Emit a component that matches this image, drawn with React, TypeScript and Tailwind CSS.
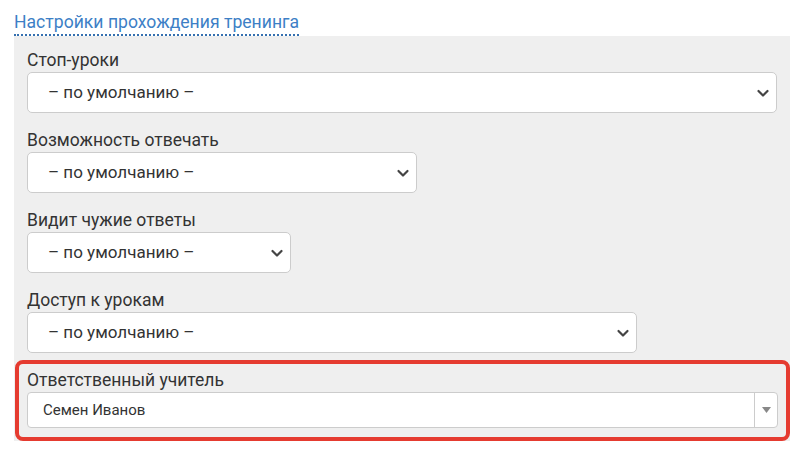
import React from "react";

const font = { fontFamily: "Roboto, 'Noto Sans', sans-serif" };

function Chevron() {
  return (
    <svg width="14" height="14" viewBox="0 0 14 14" className="shrink-0">
      <path d="M2.5 5 L7 9.5 L11.5 5" fill="none" stroke="#444" strokeWidth="2.2" strokeLinecap="round" strokeLinejoin="round" />
    </svg>
  );
}

function Select({ width }: { width: string }) {
  return (
    <div className={`${width} h-[41px] bg-white border border-[#cccccc] rounded-[5px] flex items-center justify-between pl-[20px] pr-[6px]`}>
      <span className="text-[17px] text-[#333]">– по умолчанию –</span>
      <Chevron />
    </div>
  );
}

function Field({ label, width, mb = "mb-[15px]" }: { label: string; width: string; mb?: string }) {
  return (
    <div className={mb}>
      <div className="h-[24px] leading-[24px] text-[17.5px] text-[#333]">{label}</div>
      <Select width={width} />
    </div>
  );
}

export default function App() {
  return (
    <div className="w-[806px] h-[454px] bg-white pl-[14px] pr-[16px]" style={font}>
      <div className="pt-[11px] h-[36px]">
        <span className="inline-block text-[17.6px] leading-[20px] text-[#3d7fc6] border-b-2 border-dotted border-[#3570b0] pb-[2px]">
          Настройки прохождения тренинга
        </span>
      </div>
      <div className="bg-[#efefef] h-[405px] pt-[12px] px-[13px]">
        <Field label="Стоп-уроки" width="w-full" />
        <Field label="Возможность отвечать" width="w-[390px]" />
        <Field label="Видит чужие ответы" width="w-[264px]" />
        <Field label="Доступ к урокам" width="w-[610px]" mb="mb-[7px]" />
        <div className="ml-[-12px] mr-[-13px] border-4 border-[#e53b30] rounded-[8px] pt-[4px] pb-[9px] px-[8px]">
          <div className="h-[24px] leading-[24px] text-[17.5px] text-[#333]">Ответственный учитель</div>
          <div className="h-[36px] bg-white border border-[#cccccc] rounded-[4px] flex items-stretch">
            <div className="flex-1 flex items-center pl-[15px] text-[15px] text-[#333]">Семен Иванов</div>
            <div className="w-[23px] border-l border-[#cccccc] flex items-center justify-center">
              <svg width="9" height="6" viewBox="0 0 9 6">
                <path d="M0 0 L9 0 L4.5 6 Z" fill="#888" />
              </svg>
            </div>
          </div>
        </div>
      </div>
    </div>
  );
}
